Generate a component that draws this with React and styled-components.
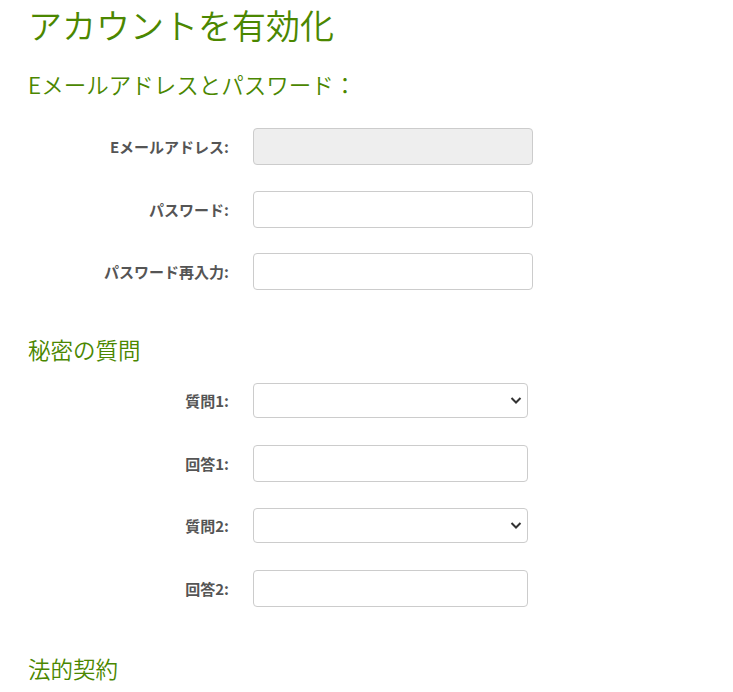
import React from "react";
import styled, { createGlobalStyle } from "styled-components";

const GlobalStyle = createGlobalStyle`
  body {
    margin: 0;
    background: #fff;
    font-family: "Noto Sans CJK JP", "Noto Sans", sans-serif;
  }
`;

const Page = styled.div`
  padding: 0 28px;
`;

const Title = styled.h1`
  margin: 0;
  font-size: 34px;
  line-height: 50px;
  font-weight: 350;
  color: #4b8700;
`;

const SectionTitle = styled.h2`
  margin: ${(p) => p.$top}px 0 0;
  font-size: 22.5px;
  line-height: 30px;
  font-weight: 350;
  color: #4b8700;
`;

const Form = styled.div`
  display: grid;
  grid-template-columns: 201px ${(p) => p.$width}px;
  column-gap: 24px;
  row-gap: 25.5px;
  margin-top: ${(p) => p.$top}px;
`;

const Label = styled.label`
  display: flex;
  align-items: center;
  justify-content: flex-end;
  height: 37px;
  font-size: 15px;
  font-weight: 700;
  color: #555;
  white-space: nowrap;
`;

const Field = styled.input`
  box-sizing: border-box;
  width: 100%;
  height: 37px;
  border: 1px solid #ccc;
  border-radius: 4px;
  background: ${(p) => (p.disabled ? "#eee" : "#fff")};
  outline: none;
`;

const SelectBox = styled.div`
  position: relative;
  display: flex;
  align-items: center;
  height: 37px;
`;

const Select = styled.select`
  box-sizing: border-box;
  width: 100%;
  height: 35px;
  border: 1px solid #ccc;
  border-radius: 4px;
  background: #fff;
  appearance: none;
  outline: none;
`;

const Chevron = styled.svg`
  position: absolute;
  right: 6px;
  top: 13px;
  pointer-events: none;
`;

const QuestionSelect = () => (
  <SelectBox>
    <Select>
      <option></option>
    </Select>
    <Chevron width="12" height="10" viewBox="0 0 12 10">
      <path d="M1.5 3 L6 7.5 L10.5 3" fill="none" stroke="#333" strokeWidth="2" />
    </Chevron>
  </SelectBox>
);

export default function App() {
  return (
    <>
      <GlobalStyle />
      <Page>
        <Title>アカウントを有効化</Title>
        <SectionTitle $top={18.5}>Eメールアドレスとパスワード：</SectionTitle>
        <Form $top={29.5} $width={280}>
          <Label>Eメールアドレス:</Label>
          <Field disabled />
          <Label>パスワード:</Label>
          <Field type="password" />
          <Label>パスワード再入力:</Label>
          <Field type="password" />
        </Form>
        <SectionTitle $top={44}>秘密の質問</SectionTitle>
        <Form $top={18} $width={275}>
          <Label>質問1:</Label>
          <QuestionSelect />
          <Label>回答1:</Label>
          <Field />
          <Label>質問2:</Label>
          <QuestionSelect />
          <Label>回答2:</Label>
          <Field />
        </Form>
        <SectionTitle $top={46}>法的契約</SectionTitle>
      </Page>
    </>
  );
}
